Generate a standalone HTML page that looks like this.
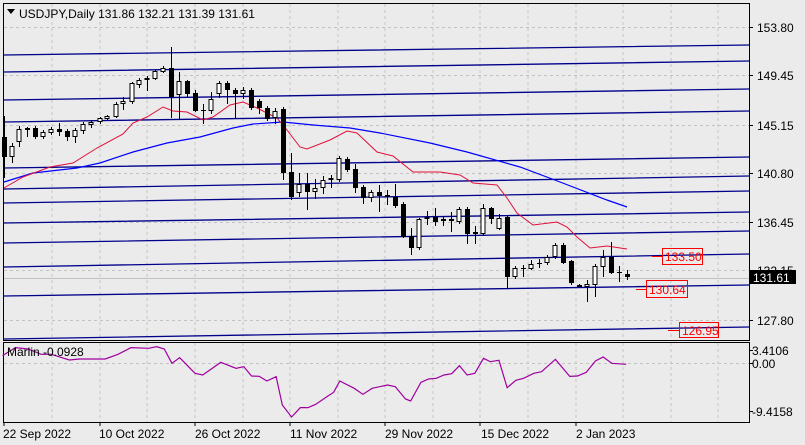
<!DOCTYPE html>
<html><head><meta charset="utf-8"><style>
html,body{margin:0;padding:0;background:#ebebeb;}
svg{display:block;font-family:"Liberation Sans",Tahoma,sans-serif;}
</style></head><body>
<svg width="805" height="445" viewBox="0 0 805 445" xmlns="http://www.w3.org/2000/svg">
<rect width="805" height="445" fill="#ebebeb"/>
<g stroke="#c4c4c4" stroke-dasharray="3,3" stroke-width="1">
<path d="M52 4V340M100 4V340M147 4V340M195 4V340M243 4V340M290 4V340M338 4V340M385 4V340M433 4V340M480 4V340M528 4V340M576 4V340M623 4V340M671 4V340M718 4V340"/>
<path d="M4 27.5H749M4 75.5H749M4 125.5H749M4 173.5H749M4 222.5H749M4 270.5H749M4 320.5H749"/>
<path d="M52 343V422M100 343V422M147 343V422M195 343V422M243 343V422M290 343V422M338 343V422M385 343V422M433 343V422M480 343V422M528 343V422M576 343V422M623 343V422M671 343V422M718 343V422M4 363.5H749"/>
</g>
<g stroke="#00008b" stroke-width="1.3" fill="none">
<path d="M4 55L749 45M4 72L749 61M4 100L749 89M4 122L749 111M4 168L749 157M4 189L749 176M4 203L749 191M4 223L749 212M4 243L749 231M4 267L749 254M4 296L749 285M4 339L749 327"/>
</g>
<path d="M4 278.5H749" stroke="#c0c0c0"/>
<polyline fill="none" stroke="#0000ff" stroke-width="1.2" points="4,182 33,173 77,168 100,163 133,152 167,143 200,137 233,128 253,124 283,122 313,125 350,128 380,133 430,143 467,152 520,167 560,182 607,200 627,207"/>
<polyline fill="none" stroke="#e0103a" stroke-width="1" points="4,188 23,177 50,167 73,163 97,148 123,134 133,123 147,117 163,107 173,111 187,112 203,120 213,117 230,105 243,102 257,108 277,118 287,130 300,147 307,149 330,140 347,131 357,133 377,152 393,156 413,172 440,172 460,175 473,183 497,185 507,198 517,213 533,225 557,222 567,227 577,237 590,248 607,246 627,249"/>
<g stroke="#000" stroke-width="1">
<path d="M4.5 116V178M12.5 143V163M19.5 126V147M27.5 127V137M35.5 126V139M43.5 130V139M51.5 127V135M59.5 123V136M67.5 129V141M75.5 128V143M83.5 122V134M91.5 120V128M100.5 117V124M107.5 115V120M116.5 102V118M123.5 97V110M132.5 82V104M139.5 78V88M147.5 76V91M155.5 70V80M163.5 66V73M171.5 47V118M179.5 72V120M187.5 80V98M195.5 90V112M203.5 104V124M211.5 92V114M219.5 81V98M227.5 81V104M235.5 88V118M243.5 87V99M251.5 88V110M259.5 99V114M267.5 106V121M275.5 108V124M283.5 107V180M291.5 153V200M299.5 173V197M307.5 173V210M315.5 179V199M323.5 176V194M331.5 175V188M339.5 156V182M347.5 157V172M355.5 164V193M363.5 185V204M371.5 190V202M379.5 185V212M387.5 190V205M395.5 184V208M403.5 202V238M411.5 228V255M419.5 218V250M427.5 211V225M435.5 208V226M443.5 216V226M451.5 212V232M459.5 207V224M467.5 207V244M475.5 226V244M483.5 204V236M491.5 207V224M499.5 214V230M507.5 216V289M515.5 266V279M523.5 265V277M531.5 260V270M539.5 259V268M547.5 255V265M555.5 243V259M563.5 243V264M571.5 260V285M579.5 284V287M587.5 280V302M595.5 264V297M603.5 250V277M611.5 242V274M619.5 266V282M627.5 270V280"/>
<g fill="#000" stroke="none">
<rect x="2" y="137" width="5" height="20"/><rect x="25" y="128" width="5" height="2"/><rect x="33" y="128" width="5" height="9"/><rect x="57" y="129" width="5" height="3"/><rect x="65" y="131" width="5" height="6"/><rect x="169" y="68" width="5" height="29"/><rect x="185" y="81" width="5" height="13"/><rect x="193" y="93" width="5" height="18"/><rect x="201" y="110" width="5" height="1"/><rect x="225" y="83" width="5" height="7"/><rect x="233" y="90" width="5" height="4"/><rect x="249" y="90" width="5" height="18"/><rect x="257" y="101" width="5" height="7"/><rect x="265" y="108" width="5" height="11"/><rect x="281" y="109" width="5" height="64"/><rect x="289" y="172" width="5" height="25"/><rect x="305" y="184" width="5" height="8"/><rect x="345" y="159" width="5" height="11"/><rect x="353" y="169" width="5" height="19"/><rect x="361" y="187" width="5" height="11"/><rect x="377" y="192" width="5" height="4"/><rect x="385" y="195" width="5" height="2"/><rect x="393" y="197" width="5" height="9"/><rect x="401" y="204" width="5" height="33"/><rect x="409" y="236" width="5" height="12"/><rect x="433" y="217" width="5" height="5"/><rect x="441" y="219" width="5" height="2"/><rect x="449" y="219" width="5" height="2"/><rect x="465" y="209" width="5" height="25"/><rect x="473" y="232" width="5" height="2"/><rect x="489" y="208" width="5" height="11"/><rect x="505" y="217" width="5" height="60"/><rect x="521" y="268" width="5" height="1"/><rect x="537" y="263" width="5" height="1"/><rect x="561" y="245" width="5" height="18"/><rect x="569" y="261" width="5" height="22"/><rect x="577" y="285" width="5" height="2"/><rect x="609" y="257" width="5" height="16"/><rect x="617" y="272" width="5" height="1"/><rect x="625" y="274" width="5" height="3"/>
</g>
<g fill="#fff">
<rect x="10" y="146.5" width="4" height="10"/><rect x="17" y="129.5" width="4" height="12"/><rect x="41" y="132.5" width="4" height="4"/><rect x="49" y="129.5" width="4" height="3"/><rect x="73" y="130.5" width="4" height="6"/><rect x="81" y="124.5" width="4" height="6"/><rect x="89" y="122.5" width="4" height="2"/><rect x="98" y="118.5" width="4" height="3"/><rect x="105" y="116.5" width="4" height="2"/><rect x="114" y="104.5" width="4" height="12"/><rect x="121" y="101.5" width="4" height="2"/><rect x="130" y="83.5" width="4" height="18"/><rect x="137" y="80.5" width="4" height="4"/><rect x="145" y="78.5" width="4" height="1"/><rect x="153" y="71.5" width="4" height="7"/><rect x="161" y="68.5" width="4" height="3"/><rect x="177" y="81.5" width="4" height="13"/><rect x="209" y="99.5" width="4" height="11"/><rect x="217" y="83.5" width="4" height="10"/><rect x="241" y="90.5" width="4" height="3"/><rect x="273" y="111.5" width="4" height="6"/><rect x="297" y="184.5" width="4" height="8"/><rect x="313" y="188.5" width="4" height="3"/><rect x="321" y="180.5" width="4" height="7"/><rect x="329" y="178.5" width="4" height="1"/><rect x="337" y="158.5" width="4" height="21"/><rect x="369" y="192.5" width="4" height="5"/><rect x="417" y="219.5" width="4" height="28"/><rect x="425" y="217.5" width="4" height="1"/><rect x="457" y="209.5" width="4" height="12"/><rect x="481" y="208.5" width="4" height="25"/><rect x="497" y="218.5" width="4" height="10"/><rect x="513" y="268.5" width="4" height="8"/><rect x="529" y="264.5" width="4" height="4"/><rect x="545" y="257.5" width="4" height="5"/><rect x="553" y="245.5" width="4" height="11"/><rect x="585" y="284.5" width="4" height="2"/><rect x="593" y="266.5" width="4" height="18"/><rect x="601" y="257.5" width="4" height="9"/>
</g>
</g>
<g stroke="#ff0000" fill="none" stroke-width="1">
<path d="M652 256.5H662M636 289.5H646M668 330.5H679"/>
<rect x="662.5" y="248.5" width="40" height="16"/>
<rect x="646.5" y="280.5" width="41" height="17"/>
<rect x="679.5" y="322.5" width="39" height="15"/>
</g>
<g fill="#ff0000" font-size="12">
<text x="665" y="261">133.50</text>
<text x="649" y="294">130.64</text>
<text x="682" y="335">126.95</text>
</g>
<g stroke="#000" fill="none">
<rect x="3.5" y="3.5" width="746" height="337"/>
<rect x="3.5" y="342.5" width="746" height="80"/>
</g>
<path d="M749 27.5h4M749 75.5h4M749 125.5h4M749 173.5h4M749 222.5h4M749 270.5h4M749 320.5h4M749 350.5h4M749 363.5h4M749 411.5h4M4 422v4M100 422v4M195 422v4M290 422v4M385 422v4M480 422v4M576 422v4" stroke="#000"/>
<g font-size="12" fill="#000">
<text x="757" y="32">153.80</text>
<text x="757" y="80">149.45</text>
<text x="757" y="130">145.15</text>
<text x="757" y="178">140.80</text>
<text x="757" y="227">136.45</text>
<text x="757" y="275">132.15</text>
<text x="757" y="325">127.80</text>
<text x="752" y="355">3.4106</text>
<text x="752" y="368">0.00</text>
<text x="752" y="416">-9.4158</text>
</g>
<rect x="750" y="270" width="46" height="14" fill="#000"/>
<text x="753" y="282" font-size="12" fill="#fff">131.61</text>
<path d="M7 9h8l-4 5z" fill="#000"/>
<text x="19" y="18" font-size="12" fill="#000">USDJPY,Daily  131.86 132.21 131.39 131.61</text>
<g transform="translate(0,335) scale(0.5133,0.3333)">
<polyline fill="none" stroke="#a000a0" stroke-width="1.2" vector-effect="non-scaling-stroke" points="5,62 30,38 55,42 80,58 100,58 135,75 155,72 205,72 230,58 255,38 290,40 305,35 320,42 335,85 350,68 380,115 395,120 430,82 460,100 475,95 490,123 505,124 520,138 538,125 550,210 568,246 585,218 600,218 615,208 640,182 650,172 662,138 690,160 707,178 725,160 755,150 770,155 790,192 800,198 820,142 835,132 850,130 865,120 880,116 895,92 910,120 925,115 942,70 955,80 972,76 988,158 1005,136 1020,130 1040,115 1055,110 1082,73 1110,124 1125,123 1142,112 1160,78 1175,66 1192,85 1220,88"/>
</g>
<text x="7" y="356" font-size="12" fill="#000">Marlin -0.0928</text>
<g font-size="12" fill="#000">
<text x="3" y="438">22 Sep 2022</text>
<text x="99" y="438">10 Oct 2022</text>
<text x="195" y="438">26 Oct 2022</text>
<text x="290" y="438">11 Nov 2022</text>
<text x="385" y="438">29 Nov 2022</text>
<text x="481" y="438">15 Dec 2022</text>
<text x="576" y="438">2 Jan 2023</text>
</g>
</svg>
</body></html>
